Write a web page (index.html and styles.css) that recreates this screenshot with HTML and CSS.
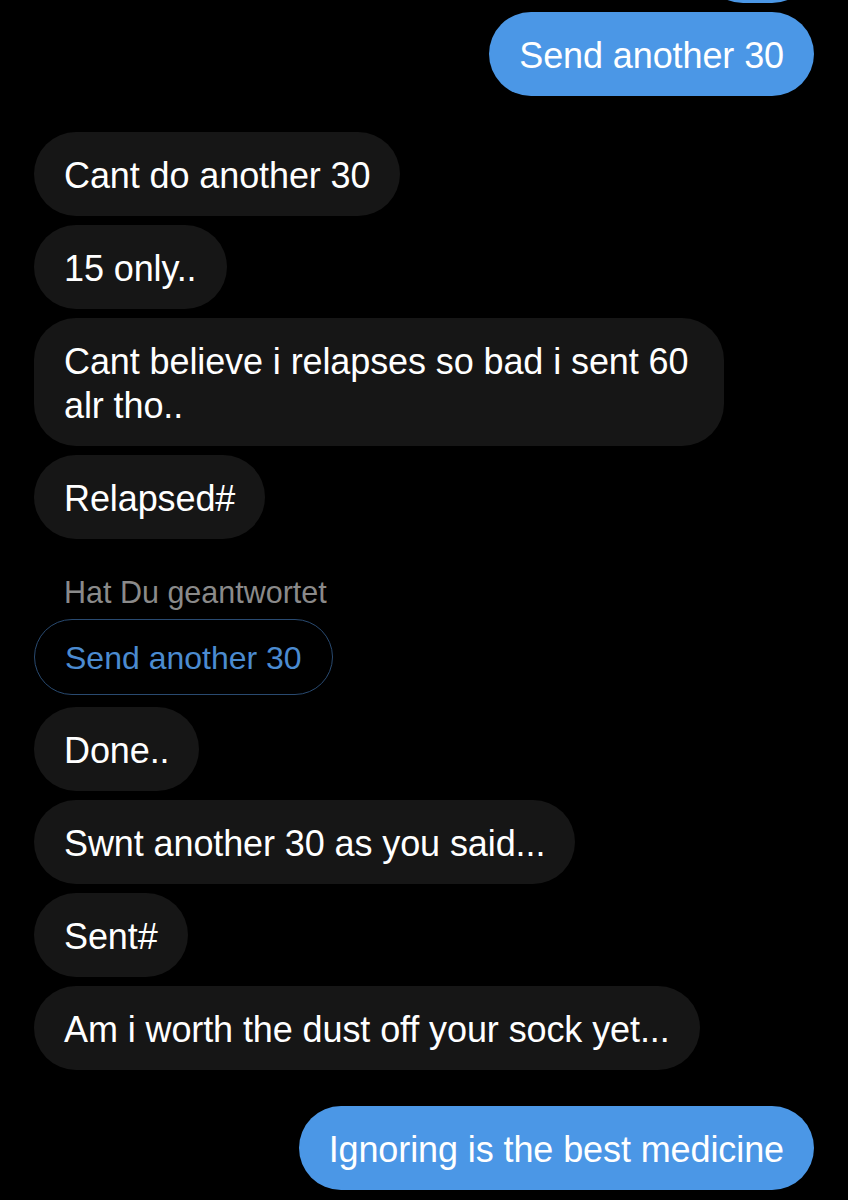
FILE: index.html
```html
<!DOCTYPE html>
<html lang="de">
  <head>
    <meta charset="UTF-8" />
    <meta name="viewport" content="width=device-width, initial-scale=1.0" />
    <title>Nachrichten</title>
    <link rel="stylesheet" href="styles.css">
  </head>
  <body>
    <div class="chat">
      <div class="group sent">
        <!-- previous message, scrolled almost out of view -->
        <div class="bubble scrolled-off"></div>
        <div class="bubble">Send another 30</div>
      </div>

      <div class="group received">
        <div class="bubble">Cant do another 30</div>
        <div class="bubble">15 only..</div>
        <div class="bubble">Cant believe i relapses so bad i sent 60 alr tho..</div>
        <div class="bubble">Relapsed#</div>

        <div class="reply-label">Hat Du geantwortet</div>
        <div class="quoted">Send another 30</div>

        <div class="bubble">Done..</div>
        <div class="bubble">Swnt another 30 as you said...</div>
        <div class="bubble">Sent#</div>
        <div class="bubble">Am i worth the dust off your sock yet...</div>
      </div>

      <div class="group sent">
        <div class="bubble">Ignoring is the best medicine</div>
      </div>
    </div>
  </body>
</html>
```

FILE: styles.css
```css
body {
  margin: 0;
  padding: 0;
  background-color: #000;
  font-family: "Liberation Sans", Arial, sans-serif;
  color: #fff;
  overflow: hidden;
}

.chat {
  display: flex;
  flex-direction: column;
  gap: 36px;
  padding: 0 34px;
  margin-top: -81px;
}

.group {
  display: flex;
  flex-direction: column;
  gap: 9px;
}

.group.sent {
  align-items: flex-end;
}

.group.received {
  align-items: flex-start;
}

.bubble {
  box-sizing: border-box;
  max-width: 690px;
  padding: 22px 30px 18px;
  border-radius: 42px;
  font-size: 36px;
  line-height: 44px;
  letter-spacing: -0.1px;
}

.bubble.scrolled-off {
  width: 113px;
  height: 84px;
}

.sent .bubble {
  background-color: #4b97e6;
  color: #fff;
}

.received .bubble {
  background-color: #161616;
  color: #fff;
}

.reply-label {
  margin-top: 26px;
  padding-left: 30px;
  font-size: 30.5px;
  line-height: 36px;
  color: #8a8a8a;
}

.quoted {
  margin-bottom: 3px;
  padding: 18px 30px 16px;
  border: 1.5px solid #294a70;
  border-radius: 40px;
  font-size: 32px;
  line-height: 40px;
  color: #4b8bd0;
}
```
